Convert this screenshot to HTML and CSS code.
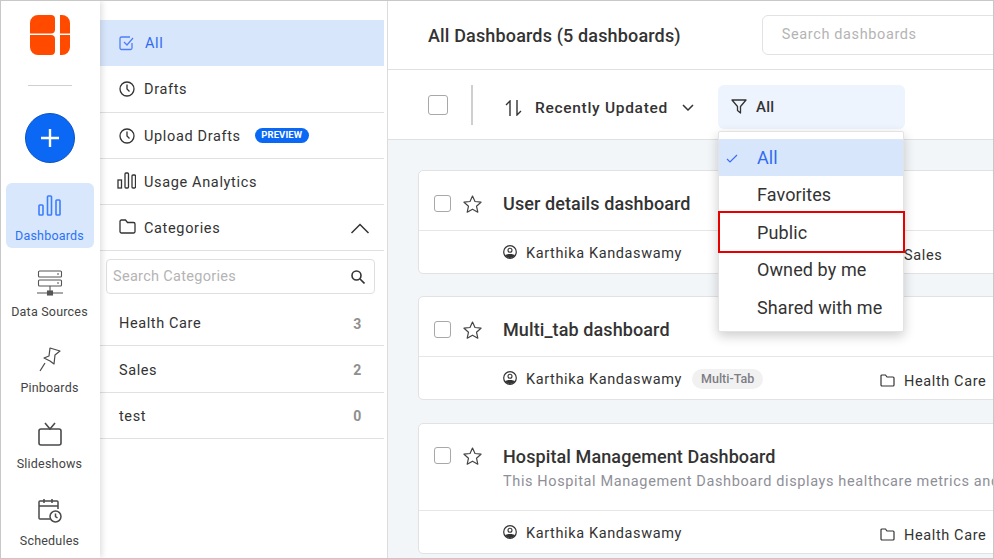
FILE: index.html
```html
<!DOCTYPE html>
<html lang="en">
<head>
<meta charset="utf-8">
<title>Dashboards</title>
<link rel="stylesheet" href="styles.css">
</head>
<body>
<div class="app">
  <aside class="rail">
    <svg class="logo" width="40" height="40" viewBox="0 0 40 40"><path fill="#ff4a00" d="M0 18.500V8a8 8 0 0 1 8-8h13a4 4 0 0 1 4 4v10.500a4 4 0 0 1-4 4zM0 20h21a4 4 0 0 1 4 4v12a4 4 0 0 1-4 4H8a8 8 0 0 1-8-8zM30 0h2a8 8 0 0 1 8 8v10.500H30zM30 20h10v12a8 8 0 0 1-8 8h-2z"/></svg>
    <div class="rail-rule"></div>
    <div class="add"><svg width="22" height="22" viewBox="0 0 22 22"><path d="M11 2v18M2 11h18" stroke="#fff" stroke-width="2.4"/></svg></div>
    <a class="rail-item active">
      <svg width="23" height="24" viewBox="0 0 23 24" fill="none" stroke="#3b7dff" stroke-width="1.6"><rect x="1" y="11" width="4" height="10" rx=".8"/><rect x="9.500" y="2" width="4" height="19" rx=".8"/><rect x="18" y="6" width="4" height="15" rx=".8"/></svg>
      <span>Dashboards</span>
    </a>
    <a class="rail-item">
      <svg width="26" height="26" viewBox="0 0 26 26" fill="none" stroke="#555" stroke-width="1.100"><rect x="1.500" y="1" width="23" height="6" rx="1"/><rect x="1.500" y="10" width="23" height="6" rx="1"/><path d="M13 16v6M0 23h26"/><rect x="10.500" y="21" width="5" height="4" fill="#555"/><path d="M20 4h2M20 13h2"/></svg>
      <span>Data Sources</span>
    </a>
    <a class="rail-item">
      <svg width="26" height="26" viewBox="0 0 26 26" fill="none" stroke="#4a4a4a" stroke-width="1.2" stroke-linejoin="round"><path d="M13 2l10 3-5 4-1 9-4-3-6-3 5-2z"/><path d="M8 17l-5 8"/></svg>
      <span>Pinboards</span>
    </a>
    <a class="rail-item">
      <svg width="26" height="26" viewBox="0 0 26 26" fill="none" stroke="#4a4a4a" stroke-width="1.6"><rect x="2" y="7" width="22" height="16" rx="2"/><path d="M8 1l5 6 5-6"/></svg>
      <span>Slideshows</span>
    </a>
    <a class="rail-item last">
      <svg width="26" height="26" viewBox="0 0 26 26" fill="none" stroke="#4a4a4a" stroke-width="1.5"><path d="M13 21H3a1 1 0 0 1-1-1V4a1 1 0 0 1 1-1h17a1 1 0 0 1 1 1v7M2 8h19M7 1v4M15 1v4"/><circle cx="18.500" cy="18.500" r="5.500"/><path d="M18.500 15.500v3l2 1.500"/></svg>
      <span>Schedules</span>
    </a>
  </aside>

  <nav class="side">
    <a class="side-row selected">
      <svg class="side-icon" width="16" height="16" viewBox="0 0 16 16" fill="none" stroke="#4d7ffb" stroke-width="1.3"><path d="M13 8v5a1.500 1.500 0 0 1-1.500 1.500h-9A1.500 1.500 0 0 1 1 13V3.500A1.500 1.500 0 0 1 2.500 2H11"/><path d="M5 7l3 3 6-7"/></svg>
      <span>All</span>
    </a>
    <a class="side-row">
      <svg class="side-icon" width="16" height="16" viewBox="0 0 16 16" fill="none" stroke="#333" stroke-width="1.3"><circle cx="8" cy="8" r="7"/><path d="M8 3.500V8l2.500 2.500"/></svg>
      <span>Drafts</span>
    </a>
    <a class="side-row lower">
      <svg class="side-icon" width="16" height="16" viewBox="0 0 16 16" fill="none" stroke="#333" stroke-width="1.3"><circle cx="8" cy="8" r="7"/><path d="M8 3.500V8l2.500 2.500"/></svg>
      <span>Upload Drafts</span>
      <b class="preview">PREVIEW</b>
    </a>
    <a class="side-row lower">
      <svg class="side-icon wide" width="19" height="17" viewBox="0 0 19 17" fill="none" stroke="#333" stroke-width="1.3"><rect x="1" y="8" width="3.500" height="8"/><rect x="8" y="1" width="3.500" height="15" rx="1"/><rect x="15" y="3" width="3.500" height="13" rx="1"/></svg>
      <span>Usage Analytics</span>
    </a>
    <a class="side-row lower">
      <svg class="side-icon wide folder" width="17" height="15" viewBox="0 0 17 15" fill="none" stroke="#333" stroke-width="1.3"><path d="M1 2.500A1.500 1.500 0 0 1 2.500 1h4l2 2.500h6A1.500 1.500 0 0 1 16 5v7.500a1.500 1.500 0 0 1-1.500 1.500h-12A1.500 1.500 0 0 1 1 12.500z"/></svg>
      <span>Categories</span>
      <svg class="chevron" width="20" height="11" viewBox="0 0 20 11" fill="none" stroke="#333" stroke-width="1.500"><path d="M1.500 10L10 1.500 18.500 10"/></svg>
    </a>
    <div class="cat-search">
      <span>Search Categories</span>
      <svg width="14" height="14" viewBox="0 0 14 14" fill="none" stroke="#333" stroke-width="1.600"><circle cx="5.500" cy="5.500" r="4.500"/><path d="M9 9l4.500 4.500"/></svg>
    </div>
    <a class="cat-row"><span>Health Care</span><b>3</b></a>
    <a class="cat-row"><span>Sales</span><b>2</b></a>
    <a class="cat-row"><span>test</span><b>0</b></a>
  </nav>

  <main class="main">
    <header class="head">
      <h1>All Dashboards (5 dashboards)</h1>
      <div class="search">Search dashboards</div>
    </header>
    <div class="toolbar">
      <i class="check big"></i>
      <div class="vrule"></div>
      <div class="sort">
        <svg width="18" height="16" viewBox="0 0 18 16" fill="none" stroke="#333" stroke-width="1.400"><path d="M1 5l4-4v15M12 0v15l4-4"/></svg>
        <span>Recently Updated</span>
        <svg width="12" height="7" viewBox="0 0 12 7" fill="none" stroke="#333" stroke-width="1.500"><path d="M1 1l5 5 5-5"/></svg>
      </div>
      <div class="filter">
        <svg width="16" height="15" viewBox="0 0 16 15" fill="none" stroke="#333" stroke-width="1.300" stroke-linejoin="round"><path d="M1 1h14L9.500 7.500V14l-3-2.500v-4z"/></svg>
        <span>All</span>
      </div>
    </div>
    <section class="list">
      <article class="card">
        <div class="card-top">
          <i class="check"></i>
          <svg class="star" width="19" height="18" viewBox="0 0 19 18" fill="none" stroke="#444" stroke-width="1.200" stroke-linejoin="round"><path d="M9.500 1l2.500 5.500 6 .7-4.500 4 1.300 6-5.300-3-5.300 3 1.300-6-4.500-4 6-.7z"/></svg>
          <div class="titles"><h2>User details dashboard</h2></div>
        </div>
        <div class="card-foot">
          <div class="owner">
            <svg class="user" width="14" height="14" viewBox="0 0 14 14"><circle cx="7" cy="7" r="6.300" fill="none" stroke="#333" stroke-width="1.200"/><circle cx="7" cy="5.300" r="2" fill="none" stroke="#333" stroke-width="1.100"/><path fill="#333" d="M2 10.500C3 8.500 11 8.500 12 10.500A6.300 6.300 0 0 1 2 10.500z"/></svg>
            <span>Karthika Kandaswamy</span>
          </div>
          <div class="cat">
            <svg width="15" height="13" viewBox="0 0 15 13" fill="none" stroke="#333" stroke-width="1.200"><path d="M1 2A1 1 0 0 1 2 1h3.500l1.500 2h6a1 1 0 0 1 1 1v7a1 1 0 0 1-1 1H2a1 1 0 0 1-1-1z"/></svg>
            <span>Sales</span>
          </div>
        </div>
      </article>
      <article class="card">
        <div class="card-top">
          <i class="check"></i>
          <svg class="star" width="19" height="18" viewBox="0 0 19 18" fill="none" stroke="#444" stroke-width="1.200" stroke-linejoin="round"><path d="M9.500 1l2.500 5.500 6 .7-4.500 4 1.300 6-5.300-3-5.300 3 1.300-6-4.500-4 6-.7z"/></svg>
          <div class="titles"><h2>Multi_tab dashboard</h2></div>
        </div>
        <div class="card-foot">
          <div class="owner">
            <svg class="user" width="14" height="14" viewBox="0 0 14 14"><circle cx="7" cy="7" r="6.300" fill="none" stroke="#333" stroke-width="1.200"/><circle cx="7" cy="5.300" r="2" fill="none" stroke="#333" stroke-width="1.100"/><path fill="#333" d="M2 10.500C3 8.500 11 8.500 12 10.500A6.300 6.300 0 0 1 2 10.500z"/></svg>
            <span>Karthika Kandaswamy</span>
            <em class="tag">Multi-Tab</em>
          </div>
          <div class="cat">
            <svg width="15" height="13" viewBox="0 0 15 13" fill="none" stroke="#333" stroke-width="1.200"><path d="M1 2A1 1 0 0 1 2 1h3.500l1.500 2h6a1 1 0 0 1 1 1v7a1 1 0 0 1-1 1H2a1 1 0 0 1-1-1z"/></svg>
            <span>Health Care</span>
          </div>
        </div>
      </article>
      <article class="card tall">
        <div class="card-top">
          <i class="check"></i>
          <svg class="star" width="19" height="18" viewBox="0 0 19 18" fill="none" stroke="#444" stroke-width="1.200" stroke-linejoin="round"><path d="M9.500 1l2.500 5.500 6 .7-4.500 4 1.300 6-5.300-3-5.300 3 1.300-6-4.500-4 6-.7z"/></svg>
          <div class="titles">
            <h2>Hospital Management Dashboard</h2>
            <p>This Hospital Management Dashboard displays healthcare metrics and</p>
          </div>
        </div>
        <div class="card-foot">
          <div class="owner">
            <svg class="user" width="14" height="14" viewBox="0 0 14 14"><circle cx="7" cy="7" r="6.300" fill="none" stroke="#333" stroke-width="1.200"/><circle cx="7" cy="5.300" r="2" fill="none" stroke="#333" stroke-width="1.100"/><path fill="#333" d="M2 10.500C3 8.500 11 8.500 12 10.500A6.300 6.300 0 0 1 2 10.500z"/></svg>
            <span>Karthika Kandaswamy</span>
          </div>
          <div class="cat">
            <svg width="15" height="13" viewBox="0 0 15 13" fill="none" stroke="#333" stroke-width="1.200"><path d="M1 2A1 1 0 0 1 2 1h3.500l1.500 2h6a1 1 0 0 1 1 1v7a1 1 0 0 1-1 1H2a1 1 0 0 1-1-1z"/></svg>
            <span>Health Care</span>
          </div>
        </div>
      </article>
    </section>
    <ul class="menu">
      <li class="on">
        <svg width="12" height="9" viewBox="0 0 12 9" fill="none" stroke="#3b6df0" stroke-width="1.200"><path d="M1 5l3 3 7-7"/></svg>
        <span>All</span>
      </li>
      <li><span>Favorites</span></li>
      <li><span>Public</span></li>
      <li><span>Owned by me</span></li>
      <li><span>Shared with me</span></li>
    </ul>
    <div class="callout"></div>
  </main>
</div>
</body>
</html>
```
FILE: styles.css
```css
* { box-sizing: border-box; }
html, body { margin: 0; height: 100%; overflow: hidden; background: #fff; }
body { font-family: Roboto, "Liberation Sans", sans-serif; color: #333; }
h1, h2, p, ul { margin: 0; padding: 0; }
a { display: flex; }
em, i { font-style: normal; }

.app {
  display: flex;
  width: 994px;
  height: 559px;
  border: 1px solid #c8c8c8;
  overflow: hidden;
}

.rail {
  flex: 0 0 99px;
  display: flex;
  flex-direction: column;
  align-items: center;
  padding: 14px 2px 0 0;
  background: #fff;
  box-shadow: 2px 0 6px rgba(0, 0, 0, .13);
  position: relative;
  z-index: 2;
}
.rail-rule { width: 44px; height: 1px; background: #cfcfcf; margin-top: 30px; }
.add {
  width: 50px;
  height: 50px;
  margin-top: 27px;
  border-radius: 50%;
  background: #0a68f5;
  border: 1px solid #0c55bf;
  display: flex;
  align-items: center;
  justify-content: center;
}
.rail-item {
  flex-direction: column;
  align-items: center;
  width: 88px;
  height: 65px;
  margin-top: 20px;
  padding-top: 11px;
  font-size: 12.500px;
  letter-spacing: .2px;
  color: #444;
  border-radius: 6px;
}
.rail-item + .rail-item { margin-top: 11px; }
.rail-item span { margin-top: 8px; line-height: 15px; white-space: nowrap; }
.rail-item.active { background: #d9e7fd; color: #2a72f5; }
.rail-item.active span { margin-top: 10px; }
.rail-item.last span { margin-top: 9px; }

.side {
  flex: 0 0 288px;
  display: flex;
  flex-direction: column;
  align-items: stretch;
  padding: 19px 3px 0 0;
  border-right: 1px solid #dcdcdc;
  background: #fff;
}
.side-row {
  align-items: center;
  height: 46px;
  padding-left: 19px;
  font-size: 14.500px;
  letter-spacing: .65px;
  color: #333;
  border-bottom: 1px solid #e1e1e1;
  position: relative;
}
.side-row.lower { padding-top: 2px; }
.side-row.selected { background: #d8e6fc; color: #2f6bf2; border-bottom: 0; margin-bottom: 1px; }
.side-row > span { margin-left: 9px; }
.side-row.selected > span { margin-left: 10px; }
.side-icon { flex: none; margin-top: -1px; }
.side-icon.wide { margin-left: -2px; margin-right: -1px; margin-top: -5px; }
.side-icon.folder { margin-left: 0; margin-right: -1px; }
.preview {
  margin-left: 14px;
  height: 15px;
  padding: 0 6.500px;
  border-radius: 8px;
  background: #0a68f5;
  color: #fff;
  font-size: 9.500px;
  line-height: 14px;
  font-weight: 700;
  letter-spacing: .1px;
  margin-top: -3px;
}
.chevron { margin-left: auto; margin-right: 14px; }
.cat-search {
  display: flex;
  align-items: center;
  justify-content: space-between;
  height: 35px;
  margin: 8px 9px 6px 6px;
  padding: 0 9px 0 6px;
  border: 1px solid #dfdfdf;
  border-radius: 4px;
  font-size: 14.500px;
  letter-spacing: .3px;
  color: #b4b4b4;
}
.cat-row {
  align-items: center;
  justify-content: space-between;
  height: 46.350px;
  padding: 2px 22px 0 19px;
  font-size: 14.500px;
  letter-spacing: .6px;
  border-bottom: 1px solid #e1e1e1;
}
.cat-row b { font-size: 14px; color: #8f8f8f; font-weight: 700; }

.main {
  flex: 1;
  min-width: 0;
  display: flex;
  flex-direction: column;
  position: relative;
  background: #f3f6f9;
  overflow: hidden;
}
.head {
  flex: 0 0 69px;
  display: flex;
  align-items: center;
  padding: 0 0 0 40px;
  background: #fff;
  border-bottom: 1px solid #e0e0e0;
}
.head h1 {
  font-size: 18px;
  font-weight: 500;
  letter-spacing: .15px;
  white-space: nowrap;
}
.search {
  flex: none;
  width: 300px;
  height: 40px;
  margin-left: 81px;
  padding: 0 19px;
  border: 1px solid #e2e2e2;
  border-radius: 6px;
  font-size: 14.500px;
  line-height: 38px;
  letter-spacing: .62px;
  color: #b4b4b4;
}
.toolbar {
  flex: 0 0 70px;
  display: flex;
  align-items: center;
  padding-left: 40px;
  background: #fff;
  border-bottom: 1px solid #e0e0e0;
}
.check {
  flex: none;
  display: block;
  width: 17px;
  height: 17px;
  border: 1px solid #a8a8a8;
  border-radius: 3px;
  background: #fff;
}
.check.big { width: 20px; height: 20px; }
.vrule { width: 2px; height: 40px; margin-left: 23px; background: #cfcfcf; }
.sort {
  display: flex;
  align-items: center;
  margin: 6px 0 0 32px;
  font-size: 15.500px;
  font-weight: 500;
  letter-spacing: .7px;
  color: #333;
}
.sort span { margin-left: 12px; }
.sort svg:last-child { margin-left: 14px; }
.filter {
  display: flex;
  align-items: center;
  width: 187px;
  height: 44px;
  margin: 4px 0 0 24px;
  padding-left: 13px;
  background: #eef4fd;
  border-radius: 6px;
  font-size: 15px;
  font-weight: 500;
  letter-spacing: .3px;
}
.filter span { margin-left: 9px; }

.list {
  display: flex;
  flex-direction: column;
  gap: 22px;
  padding: 30px 0 0 30px;
  width: 700px;
}
.card {
  flex: none;
  height: 104px;
  background: #fff;
  border: 1px solid #e2e2e2;
  border-radius: 5px;
  display: flex;
  flex-direction: column;
}
.card.tall { height: 131px; margin-top: 1px; }
.card-top {
  flex: 1;
  display: flex;
  align-items: center;
  padding: 6px 0 0 15px;
  border-bottom: 1px solid #e6e6e6;
}
.card.tall .card-top { align-items: flex-start; padding-top: 23px; }
.star { flex: none; margin-left: 12px; }
.titles { margin-left: 21px; min-width: 0; white-space: nowrap; }
.card.tall .titles { margin-top: -1px; }
.titles h2 {
  font-size: 18px;
  line-height: 22px;
  font-weight: 500;
  letter-spacing: .1px;
  color: #333;
}
.titles p {
  margin-top: 4px;
  font-size: 14.500px;
  line-height: 20px;
  letter-spacing: .62px;
  color: #8f8f98;
}
.card-foot {
  flex: 0 0 42px;
  display: grid;
  grid-template-columns: 377px auto;
  align-items: center;
  padding-left: 84px;
  font-size: 14.500px;
  letter-spacing: .62px;
}
.owner, .cat { display: flex; align-items: center; white-space: nowrap; }
.owner { margin-top: 2px; }
.cat { margin-top: 4px; }
.owner > span { margin-left: 9px; }
.cat > span { margin-left: 9px; margin-top: 2px; }
.user { flex: none; margin-top: -3px; }
.tag {
  margin-left: 10px;
  height: 20px;
  padding: 0 9px;
  border-radius: 10px;
  background: #f1f1f1;
  color: #7d7d85;
  font-size: 12.500px;
  font-weight: 500;
  line-height: 20px;
  letter-spacing: 0;
}

.menu {
  position: absolute;
  left: 330px;
  top: 130px;
  width: 186px;
  height: 201px;
  padding: 6.700px 0 0;
  list-style: none;
  background: #fff;
  border: 1px solid #e3e3e3;
  border-radius: 2px;
  box-shadow: 0 4px 12px rgba(0, 0, 0, .2);
  z-index: 3;
}
.menu li {
  position: relative;
  height: 37.500px;
  padding-left: 38px;
  font-size: 18px;
  line-height: 37px;
  letter-spacing: .1px;
  color: #333;
}
.menu li.on { background: #d8e6fc; color: #2f6bf2; }
.menu li svg { position: absolute; left: 7px; top: 15px; }
.callout {
  position: absolute;
  left: 330px;
  top: 210px;
  width: 187px;
  height: 42px;
  border: 2px solid #e60000;
  z-index: 4;
}
```
